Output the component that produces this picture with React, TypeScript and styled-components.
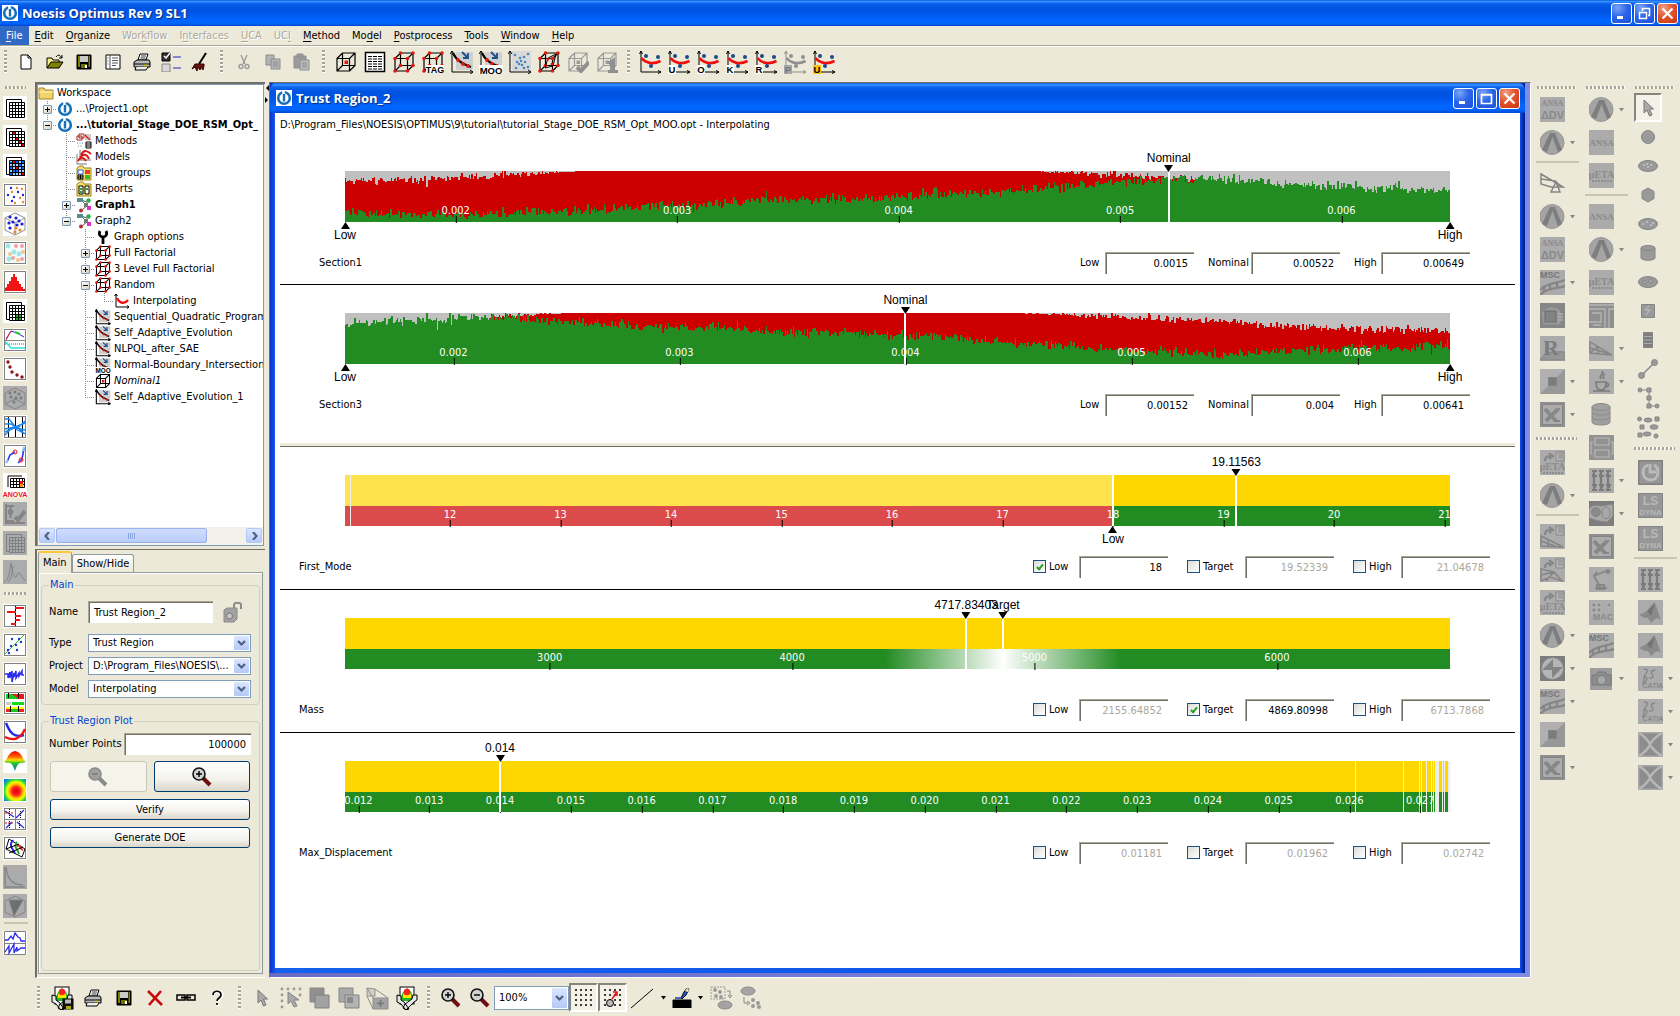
import React from "react";
import styled, { createGlobalStyle, css } from "styled-components";

const FACE = "#ece9d8";
const UI = `"DejaVu Sans Condensed", "DejaVu Sans", sans-serif`;
const PLOT = `"Liberation Sans", Arial, sans-serif`;

const Global = createGlobalStyle`
  *, *::before, *::after { box-sizing: border-box; }
  body { margin: 0; background: ${FACE}; font: 11px/14px ${UI}; color: #000; }
  button, input, select { font: inherit; color: inherit; margin: 0; padding: 0; border-radius: 0; }
  button { background: none; border: 0; }
  svg { display: block; flex: none; }
`;

/* ---------- frame ---------- */
const Shell = styled.div`
  display: flex;
  flex-direction: column;
  height: 100vh;
  overflow: hidden;
`;
const xpBlue = "linear-gradient(180deg,#0a5be8 0,#3a93ff 6%,#0a62ee 14%,#0053e1 30%,#0054e6 50%,#0066ff 76%,#0064fa 90%,#0046cf 100%)";
const TitleBar = styled.header<{ $inner?: boolean }>`
  display: flex;
  align-items: center;
  flex: none;
  height: ${(p) => (p.$inner ? 30 : 26)}px;
  padding: 0 ${(p) => (p.$inner ? 5 : 2)}px 0 ${(p) => (p.$inner ? 6 : 2)}px;
  background: ${xpBlue};
  border-radius: ${(p) => (p.$inner ? "7px 7px 0 0" : "0")};
`;
const TitleText = styled.h1`
  flex: 1;
  margin: 0 0 0 4px;
  font: 700 13px/18px "Open Sans", sans-serif;
  color: #fff;
  text-shadow: 1px 1px 1px #0a2a80;
`;
const WinButtons = styled.div`
  display: flex;
  gap: 2px;
`;
const WinButton = styled.button<{ $close?: boolean }>`
  display: grid;
  place-items: center;
  width: 21px;
  height: 21px;
  border: 1px solid #fff;
  border-radius: 3px;
  background: ${(p) =>
    p.$close
      ? "radial-gradient(circle at 30% 20%,#f0a088 0,#e2552f 45%,#c8340c 100%)"
      : "radial-gradient(circle at 30% 20%,#7aa6f5 0,#2d66ea 45%,#1c4fd8 100%)"};
`;
const MenuBar = styled.nav`
  display: flex;
  flex: none;
  height: 21px;
  border-bottom: 1px solid #fff;
  box-shadow: inset 0 -1px 0 #aca899;
`;
const MenuItem = styled.button<{ $active?: boolean }>`
  height: 19px;
  padding: 0 6px;
  color: ${(p) => (p.$active ? "#fff" : "#000")};
  background: ${(p) => (p.$active ? "#316ac5" : "transparent")};
  &:disabled { color: #aca899; text-shadow: 1px 1px 0 #fff; }
  u { text-underline-offset: 2px; }
`;
const Body = styled.div`
  display: flex;
  flex: 1;
  min-height: 0;
`;

/* ---------- tool bars ---------- */
const ToolBar = styled.div<{ $bottom?: boolean }>`
  display: flex;
  align-items: center;
  flex: none;
  height: ${(p) => (p.$bottom ? 37 : 35)}px;
  padding: 0 0 ${(p) => (p.$bottom ? 0 : 5)}px ${(p) => (p.$bottom ? 31 : 0)}px;
  & > :first-child { ${(p) => !p.$bottom && "width: 11px; padding: 0 4px;"} }
`;
const Handle = styled.span<{ $down?: boolean }>`
  flex: none;
  ${(p) =>
    p.$down
      ? css`height: 15px; padding: 6px 4px; width: 100%;
        &::before { content: ""; display: block; height: 3px;
          background: repeating-linear-gradient(90deg, #a8a597 0 2px, #fff 2px 3px, ${FACE} 3px 4px); }`
      : css`width: 15px; height: 24px; padding: 0 6px;
        &::before { content: ""; display: block; height: 100%;
          background: repeating-linear-gradient(180deg, #a8a597 0 2px, #fff 2px 3px, ${FACE} 3px 4px); }`}
`;
const Rule = styled.hr`
  flex: none;
  width: calc(100% - 6px);
  height: 2px;
  margin: 2px 0 4px 4px;
  border: 0;
  background: #c9c5b2;
`;
const ToolButton = styled.button<{ $w?: number; $h?: number; $on?: boolean }>`
  display: grid;
  place-items: center;
  flex: none;
  width: ${(p) => p.$w ?? 29}px;
  height: ${(p) => p.$h ?? 29}px;
  ${(p) =>
    p.$on &&
    css`border: 2px solid; border-color: #87857b #fff #fff #87857b; background: #f3f1e8;`}
`;
const Drop = styled.button`
  width: 15px;
  height: 25px;
  display: grid;
  place-items: center;
`;
const LeftTools = styled.div`
  display: flex;
  flex-direction: column;
  flex: none;
  width: 35px;
  padding-right: 5px;
`;
const RightTools = styled.div`
  display: flex;
  flex: none;
  padding: 0 1px;
`;
const RightColumn = styled.div`
  width: 49px;
  display: flex;
  flex-direction: column;
`;
const TopHandle = styled.span`
  display: block;
  flex: none;
  height: 11px;
  padding: 4px 4px 4px 5px;
  &::before {
    content: "";
    display: block;
    height: 3px;
    background: repeating-linear-gradient(90deg, #a8a597 0 2px, #fff 2px 3px, ${FACE} 3px 4px);
  }
`;
const RightCell = styled.div`
  display: flex;
  align-items: center;
  height: 33px;
  padding-left: 7px;
`;
const ShapeCell = styled.div`
  height: 29px;
  padding-left: 4px;
`;

/* ---------- side panel ---------- */
const Side = styled.aside`
  display: flex;
  flex-direction: column;
  flex: none;
  width: 230px;
`;
const TreeFrame = styled.section`
  display: flex;
  flex-direction: column;
  flex: 1;
  min-height: 0;
  border: solid #716f64;
  border-width: 2px 0 0 2px;
  margin-bottom: 3px;
`;
const TreeView = styled.div`
  display: flex;
  flex-direction: column;
  flex: 1;
  min-height: 0;
  width: 227px;
  border: 1px solid #7f9db9;
  background: #fff;
`;
const TreeList = styled.ul`
  flex: 1;
  min-height: 0;
  margin: 0;
  padding: 0;
  list-style: none;
  overflow: hidden;
`;
const TreeRow = styled.li<{ $bold?: boolean; $italic?: boolean }>`
  display: flex;
  align-items: center;
  height: 16px;
  white-space: nowrap;
  font-weight: ${(p) => (p.$bold ? 700 : 400)};
  font-style: ${(p) => (p.$italic ? "italic" : "normal")};
`;
const TreeLabel = styled.span`
  margin-left: 3px;
`;
const Guide = styled.span<{ $line: string }>`
  display: grid;
  place-items: center;
  position: relative;
  flex: none;
  width: 19px;
  height: 16px;
  &::before {
    content: "";
    position: absolute;
    left: 9px;
    top: 0;
    width: 1px;
    height: ${(p) => (p.$line === "end" ? 8 : 16)}px;
    background: ${(p) =>
      p.$line === "none" ? "none" : "repeating-linear-gradient(180deg,#8c8c8c 0 1px,#fff 1px 2px)"};
  }
  &::after {
    content: "";
    position: absolute;
    left: 9px;
    right: 0;
    top: 8px;
    height: 1px;
    background: ${(p) =>
      p.$line === "end" || p.$line === "tee" ? "repeating-linear-gradient(90deg,#8c8c8c 0 1px,#fff 1px 2px)" : "none"};
  }
`;
const Expander = styled.button`
  position: relative;
  z-index: 1;
  display: grid;
  place-items: center;
  width: 9px;
  height: 9px;
  border: 1px solid #7898b5;
  border-radius: 1px;
  background: linear-gradient(135deg,#fff,#d6d0c0);
`;
const ScrollBar = styled.div`
  display: flex;
  flex: none;
  height: 18px;
  padding: 1px 1px 2px;
  gap: 1px;
  background: #f3f1ec;
`;
const ScrollButton = styled.button`
  display: grid;
  place-items: center;
  width: 16px;
  height: 15px;
  border: 1px solid #b4c8f6;
  border-radius: 2px;
  background: linear-gradient(#dbe6fe,#b8ccfa);
`;
const ScrollTrack = styled.div`
  flex: 1;
  display: flex;
`;
const ScrollThumb = styled.div`
  display: grid;
  place-items: center;
  width: 80%;
  border: 1px solid #98b2ee;
  border-radius: 2px;
  background: linear-gradient(#cfddfd,#b9cdfb);
`;
const Props = styled.section`
  display: flex;
  flex-direction: column;
  flex: none;
  height: 429px;
  padding: 1px 1px 3px 1px;
  border: solid #716f64;
  border-width: 1px 0 0 2px;
  border-bottom: 1px solid #fff;
  margin-bottom: 1px;
`;
const Tabs = styled.div`
  display: flex;
  align-items: flex-end;
  height: 21px;
`;
const Tab = styled.button<{ $active?: boolean }>`
  height: ${(p) => (p.$active ? 22 : 18)}px;
  margin-bottom: ${(p) => (p.$active ? -1 : 0)}px;
  padding: 0 4px;
  border: 1px solid #919b9c;
  border-bottom: 0;
  border-radius: 3px 3px 0 0;
  background: ${(p) => (p.$active ? FACE : "linear-gradient(#fff,#ece9d8)")};
  ${(p) => p.$active && css`border-top: 2px solid #ffc73c; z-index: 1;`}
`;
const Pane = styled.form`
  display: flex;
  flex-direction: column;
  flex: 1;
  width: 225px;
  padding: 5px 2px 2px 2px;
  border: 1px solid #919b9c;
  box-shadow: inset 1px 1px 0 #fff;
`;
const Group = styled.fieldset<{ $grow?: boolean }>`
  display: flex;
  flex-direction: column;
  min-width: 0;
  flex: ${(p) => (p.$grow ? 1 : "none")};
  margin: 0 0 ${(p) => (p.$grow ? 0 : 9)}px;
  padding: ${(p) => (p.$grow ? 5 : 9)}px 8px 6px 7px;
  border: 1px solid #d0d0bf;
  border-radius: 4px;
`;
const Legend = styled.legend`
  margin: 0;
  padding: 0 1px;
  line-height: 14px;
  color: #0046d5;
`;
const FormRow = styled.div<{ $gap?: number }>`
  display: flex;
  align-items: center;
  margin-bottom: ${(p) => p.$gap ?? 5}px;
`;
const FormLabel = styled.label`
  width: 39px;
`;
const NumberLabel = styled.label`
  width: 75px;
  white-space: nowrap;
`;
const sunken = css`
  height: 22px;
  border: solid #aca899;
  border-width: 1px 0 0 1px;
  box-shadow: inset 1px 1px 0 #716f64;
  background: #fff;
  outline: 0;
`;
const TextInput = styled.input<{ $right?: boolean }>`
  ${sunken}
  flex: 1;
  min-width: 0;
  padding: 0 5px;
  text-align: ${(p) => (p.$right ? "right" : "left")};
`;
const LockButton = styled.button`
  width: 22px;
  margin: 0 7px 0 9px;
`;
const SelectBox = styled.span<{ $w?: number; $h?: number }>`
  display: grid;
  align-items: center;
  flex: ${(p) => (p.$w ? "none" : 1)};
  width: ${(p) => (p.$w ? p.$w + "px" : "auto")};
  height: ${(p) => p.$h ?? 18}px;
  border: 1px solid #7f9db9;
  background: #fff;
  min-width: 0;
  & > * { grid-area: 1 / 1; }
`;
const Select = styled.select`
  appearance: none;
  width: 100%;
  height: 100%;
  padding-left: 4px;
  border: 0;
  background: none;
  outline: 0;
`;
const SelectArrow = styled.span`
  justify-self: end;
  align-self: stretch;
  display: grid;
  place-items: center;
  width: 15px;
  margin: 1px;
  border-radius: 1px;
  background: linear-gradient(#dbe6fe,#b4c8f6);
  pointer-events: none;
`;
const PushButton = styled.button<{ $tall?: boolean }>`
  display: grid;
  place-items: center;
  flex: 1;
  height: ${(p) => (p.$tall ? 31 : 21)}px;
  border: 1px solid #003c74;
  border-radius: 3px;
  background: linear-gradient(#fff,#f3f2ec 60%,#d9d5c8);
  &:disabled { border-color: #c9c7ba; background: #f5f4ea; }
`;
const ButtonRow = styled.div`
  display: flex;
  gap: 7px;
  margin: 0 1px 7px;
`;
const Splitter = styled.div`
  flex: none;
  width: 4px;
  padding-top: 3px;
`;

/* ---------- MDI area ---------- */
const Mdi = styled.main`
  display: flex;
  flex: 1;
  min-width: 0;
  margin-bottom: 1px;
  padding: 0 5px 4px 0;
  border: 1px solid;
  border-color: #716f64 #fff #fff #716f64;
  background: linear-gradient(90deg,#6a6cc4,#7f8ce6);
`;
const Child = styled.section`
  display: flex;
  flex-direction: column;
  flex: 1;
  min-width: 0;
  border: solid #0036c8;
  border-width: 0 5px 5px;
  border-image: linear-gradient(90deg,#0a2fd0,#1660ee 6px,#0a50e8 calc(100% - 5px),#00138c) 1;
  border-image-slice: 0 5 5 5;
`;
const ChildTitle = styled.div`
  margin: 0 -5px;
`;
const Sheet = styled.div`
  flex: 1;
  padding: 0 5px;
  background: #fff;
`;
const Path = styled.p`
  height: 30px;
  margin: 0;
  padding: 5px 0 0;
  line-height: 14px;
`;
const Band = styled.hr`
  height: 4px;
  margin: 17px 0 0;
  border: 0;
  border-bottom: 1px solid #716f64;
  background: #ece9d8;
  background-clip: padding-box;
`;
const PlotSection = styled.section<{ $output?: boolean; $last?: boolean }>`
  padding: 28px 0 ${(p) => (p.$output ? 11 : 10)}px;
  border-bottom: ${(p) => (p.$last ? 0 : 1)}px solid #000;
`;
const BarArea = styled.div`
  position: relative;
  height: 51px;
  margin: 0 65px 29px;
`;
const AxisLayer = styled.div`
  position: absolute;
  inset: 0 0 -1px 0;
  overflow: hidden;
`;
const Tick = styled.span`
  position: absolute;
  bottom: 0;
  height: 19px;
  transform: translateX(-50%);
  line-height: 14px;
  color: #fff;
  text-align: center;
  &::after {
    content: "";
    position: absolute;
    left: 50%;
    bottom: 0;
    width: 1px;
    height: 7px;
    background: #000;
  }
`;
const Marker = styled.div<{ $below?: boolean }>`
  position: absolute;
  top: ${(p) => (p.$below ? 51 : -19)}px;
  display: flex;
  flex-direction: ${(p) => (p.$below ? "column-reverse" : "column")};
  align-items: center;
  transform: translateX(-50%);
  font: 12px/13px ${PLOT};
`;
const MarkerLine = styled.span`
  position: absolute;
  top: 0;
  width: 2px;
  height: 51px;
  margin-left: -1px;
  background: #fff;
`;
const FieldRow = styled.div<{ $output?: boolean }>`
  display: flex;
  align-items: center;
  gap: ${(p) => (p.$output ? 19 : 14)}px;
  height: 23px;
  padding: 0 ${(p) => (p.$output ? "25px 0 19px" : "45px 0 39px")};
`;
const VariableName = styled.span`
  flex: 1;
`;
const Field = styled.span`
  display: flex;
  align-items: center;
`;
const FieldLabel = styled.label<{ $output?: boolean; $w: number }>`
  display: flex;
  align-items: center;
  width: ${(p) => p.$w}px;
`;
const ValueInput = styled.input`
  ${sunken}
  width: 89px;
  padding: 0 6px 0 4px;
  text-align: right;
  &:disabled { color: #aca899; }
`;
const Check = styled.input`
  appearance: none;
  width: 13px;
  height: 13px;
  margin-right: 3px;
  border: 1px solid #1c5180;
  background: linear-gradient(135deg,#dcdcd7,#fff);
  display: grid;
  place-items: center;
  &:checked::before {
    content: "";
    width: 4px;
    height: 7px;
    border: solid #21a121;
    border-width: 0 2px 2px 0;
    transform: rotate(40deg);
  }
`;

/* ---------- icon drawing ---------- */
type IconProps = { children?: React.ReactNode; s?: number; v?: number; box?: string };
const Svg = ({ children, s = 24, v = 24, box }: IconProps) => (
  <svg width={s} height={s} viewBox={box ?? `0 0 ${v} ${v}`} fill="none" stroke="#000" strokeWidth="1" aria-hidden="true">
    {children}
  </svg>
);
const T = ({ x, y, z, f = "#8a8a8a", fam = "Liberation Sans", children }: any) => (
  <text x={x} y={y} fontSize={z} fill={f} stroke="none" fontWeight="700" textAnchor="middle" fontFamily={`${fam}, sans-serif`}>
    {children}
  </text>
);
const Logo = ({ bg = false, s = 16 }) => (
  <Svg s={s} v={16}>
    {bg && <rect width="16" height="16" fill="#fff" stroke="none" />}
    <circle cx="8" cy="8" r="5.800" stroke="#1670b8" strokeWidth="2.600" />
    <path d="M7.500 0v6" stroke="#fff" strokeWidth="2.600" />
    <path d="M8 4v7.500" stroke="#1670b8" strokeWidth="2.400" />
  </Svg>
);
const Caret = ({ c = "#000" }) => (
  <svg width="5" height="4" viewBox="0 0 5 4" aria-hidden="true"><path d="M0 0h5L2.5 3.5z" fill={c} /></svg>
);
const Chevron = ({ d = "M1 2l3.500 3.500L8 2" }) => (
  <svg width="9" height="8" viewBox="0 0 9 8" fill="none" stroke="#4d6185" strokeWidth="2.200" aria-hidden="true"><path d={d} /></svg>
);
const cubePath = "M3 8.500h12.500v12.500H3zM8.500 3h12.500v12.500H8.500zM3 8.500L8.500 3M15.500 8.500L21 3M3 21l5.500-5.500M15.500 21l5.500-5.500";
const cornerPts = [[3, 8.5], [15.5, 8.5], [3, 21], [15.5, 21], [8.5, 3], [21, 3], [8.5, 15.5], [21, 15.5]];
const dots = (pts: number[][], c: string, r = 1.5) =>
  pts.map(([x, y], i) => <circle key={i} cx={x} cy={y} r={r} fill={c} stroke="none" />);
const Cube = ({ s = 22, c = "#000", corners = false, center = false, children }: any) => (
  <Svg s={s} box="1 1 22 22">
    <path d={cubePath} stroke={c} strokeWidth={s < 20 ? 1.4 : 1.2} />
    {corners && dots(cornerPts, "#e21a10", 1.8)}
    {center && <rect x="10.500" y="10.500" width="3.500" height="3.500" fill={c === "#000" ? "#e21a10" : c} stroke="none" />}
    {children}
  </Svg>
);
const Descent = ({ s = 24, moo = false }) => (
  <Svg s={s}>
    <path d="M6 2h17v18H6z" fill="#cfcfcf" stroke="none" />
    <path d="M2 1v21h21M0 4l2-3 2 3M20 20l3 2-3 2" strokeWidth={s < 20 ? 1.6 : 1} />
    <path d="M3 3c3 7 8 10 18 14" strokeWidth="2.200" />
    <path d="M12 2l6 6M18 3v5h-5" stroke="#1c4f8c" strokeWidth="1.800" />
    {dots([[8, 10], [13, 14], [18, 16]], "#e21a10", s < 20 ? 1.7 : 1.9)}
    {moo && <><rect y="15" width="24" height="9" fill="#fff" stroke="none" /><T x="12" y="23.500" z="9.500" f="#000">MOO</T></>}
  </Svg>
);
const Response = ({ tag, off, gold }: { tag?: string; off?: boolean; gold?: boolean }) => {
  const k = off ? "#8f8f8f" : "#000";
  return (
    <Svg>
      <path d="M2 1v21h20M.5 4L2 1l1.500 3M19 20.500l3 1.500-3 1.500" stroke={k} />
      <path d="M2.500 8c4 5 11 7 19 3" stroke={off ? k : "#f20d0d"} strokeWidth="2.600" />
      {dots([[7, 6], [19, 7], [12, 16]], off ? k : "#1b4b8a", 2)}
      {tag && <><rect x="0" y="15" width="8" height="9" fill={gold ? "#ffc20e" : off ? "#a6a6a6" : "#fff"} stroke="none" /><T x="4" y="23" z="9.500" f={off ? "#777" : "#000"}>{tag}</T></>}
    </Svg>
  );
};
const Magnifier = ({ plus = false, off = false, s = 22 }) => (
  <Svg s={s} v={22}>
    <path d="M12 12l7 7" stroke={off ? "#8a8a8a" : "#6e0f0f"} strokeWidth="4" />
    <circle cx="8" cy="8" r="6" fill={off ? "#a0a0a0" : "#d2d2d2"} stroke={off ? "#8a8a8a" : "#111"} strokeWidth="1.600" />
    <path d={plus ? "M5 8h6M8 5v6" : "M5 8h6"} stroke={off ? "#777" : "#000"} strokeWidth="1.400" />
  </Svg>
);
const Disk = () => (
  <Svg s={16} v={16}>
    <path d="M1 1h14v14H1z" fill="#000" /><path d="M2 2h2v11H2z" fill="#808000" stroke="none" />
    <path d="M4 2h8v6H4z" fill="#c8c8c8" stroke="none" /><path d="M12.500 2h1.500v11h-1.500z" fill="#808000" stroke="none" />
    <path d="M5 10h6v4H5z" fill="#707000" stroke="none" /><path d="M9 11h2v3H9z" fill="#fff" stroke="none" />
  </Svg>
);
const Printer = () => (
  <Svg s={18} v={18}>
    <path d="M5 7l2-6h8l-2 6z" fill="#fff" /><path d="M1 9l3-2h12l1 2v5H1z" fill="#b8b8b8" /><path d="M1 11h16M3 14l-1 3h11l2-3" fill="#eee" />
    <path d="M8 3h5M7.500 5h5" strokeWidth=".8" /><path d="M11 12.500h3" stroke="#d8c800" strokeWidth="1.500" />
  </Svg>
);
const Arrow = ({ s = 18 }) => (
  <Svg s={s} v={18}><path d="M5 1v13l3-3 2.500 6 2.500-1-2.500-6h4z" fill="#a9a9a9" stroke="#777" /></Svg>
);
const Rainbow = ({ disk = false }) => (
  <Svg s={24}>
    <rect x="5" y="1" width="14" height="17" fill="#fff" />
    <path d="M12 2c5 4 7 8 6 13H6C5 10 8 5 12 2z" fill="#24b324" stroke="none" />
    <path d="M12 3c3 3 5 6 4 9H8c-1-3 1-6 4-9z" fill="#ffe100" stroke="none" /><circle cx="12" cy="6" r="3.200" fill="#f22" stroke="none" />
    <path d="M2 9l4 1v4l3 2 5 7-3 1-5-6-4-2zM22 9l-4 0-1 4-7 5-2 4 3 2 8-8 3-2z" fill="#e6e6e6" />
    {disk && <><rect x="13" y="13" width="10" height="10" fill="#111" /><path d="M15 13.500h6v4h-6z" fill="#bbb" stroke="none" /><path d="M16 20h5v3h-5z" fill="#b8b000" stroke="none" /></>}
  </Svg>
);

const gridLines = "M9.500 7v15M12.500 7v15M15.500 7v15M18.500 7v15M6 9.500h15M6 12.500h15M6 15.500h15M6 18.500h15M6.500 6.500h15v15h-15z";
const Grid = ({ c = "#000", bg = "#fff", children }: any) => (
  <Svg>
    <rect width="24" height="24" fill={bg} stroke="none" />
    <path d="M6 20.500h-2.500v-17h15v3" stroke={c} />
    {children}
    <path d={gridLines} stroke={c} />
  </Svg>
);
const Box = ({ children }: any) => (
  <Svg><rect width="24" height="24" fill="#fff" stroke="none" /><rect x="1.500" y="1.500" width="21" height="21" stroke="#808080" />{children}</Svg>
);
const Dim = ({ children }: any) => (
  <Svg><rect width="24" height="24" fill="#ababab" stroke="none" /><g stroke="#858585">{children}</g></Svg>
);

const leftA: React.ReactNode[] = [
  <Grid />,
  <Grid><path d="M9 7h4v3H9zM12 12h4v4h-4zM15 15h4v4h-4zM18 18h4v4h-4z" fill="#e00" stroke="none" /></Grid>,
  <Grid><path d="M6 7h15v14H6z" fill="#9cd2ff" stroke="none" /><path d="M7 8h2v2H7zM13 7h2v2h-2zM7 13h2v2H7zM13 16h2v2h-2zM16 10h2v2h-2zM7 19h2v2H7zM10 16h2v2h-2zM19 13h2v2h-2zM19 7h2v2h-2z" fill="#06f" stroke="none" /><path d="M10 7h3v3h-3zM12 12h4v4h-4zM18 18h4v4h-4z" fill="#e00" stroke="none" /></Grid>,
  <Box>{dots([[8, 5], [5, 12], [11, 14], [15, 9], [20, 12], [9, 18]], "#1b2bd8", 1.200)}{dots([[14, 5], [19, 6], [9, 9], [17, 15], [12, 20], [20, 19]], "#e88a2a", 1.200)}</Box>,
  <Svg><rect width="24" height="24" fill="#fff" stroke="none" /><path d="M12 1l10 5v12l-10 5-10-5V6zM2 6l10 5 10-5M12 11v12" stroke="#909090" />{dots([[7, 5], [13, 6], [6, 11], [10, 10], [16, 9], [19, 12], [14, 13], [7, 16]], "#1b1bd8", 1.600)}{dots([[13, 16], [17, 18], [12, 20]], "#e8862a", 1.600)}</Svg>,
  <Box><rect x="2" y="2" width="20" height="20" fill="#f4fafa" stroke="none" />{dots([[5, 5], [11, 11], [16, 13], [6, 18]], "#9fe6e6", 2.400)}{dots([[19, 5], [10, 17], [19, 18], [13, 5]], "#f0a0a0", 2)}{dots([[7, 13], [15, 19], [20, 11]], "#f4c48a", 2)}</Box>,
  <Box><path d="M2 21v-3l2-1v-3h2v-3h2V7h2V4h2v3h2v4h2v3h2v3h2v2h2v2z" fill="#f01414" stroke="none" /></Box>,
  <Grid><path d="M12 15h7v7h-7z" fill="#1fae1f" stroke="none" /></Grid>,
  <Box><path d="M2 12.500h20" stroke="#888" /><path d="M3 11l5-8 6 2 7 4" stroke="#2a2ae0" /><path d="M3 12l5-9" stroke="#e22" /><path d="M12 4l5 2" stroke="#2c2" strokeWidth="2" /><path d="M2 16h20" stroke="#d22" strokeDasharray="1 1" /><path d="M2 13l6 7h14" stroke="#3dd" strokeWidth="1.500" /></Box>,
  <Box>{dots([[5, 5], [7, 10], [9, 15], [14, 18], [19, 20]], "#8c1414", 1.700)}</Box>,
  <Dim><path d="M12 2l10 5v11l-10 5-10-5V7zM2 18l10-5 10 5" />{dots([[7, 7], [12, 6], [16, 8], [8, 11], [13, 12], [18, 12], [11, 16]], "#7c7c7c", 1.500)}</Dim>,
  <Box><path d="M5.500 2v20M12.500 2v20M19.500 2v20" /><path d="M2 4h4l8 10 8-8M2 9h6l6 3 8 7M2 14l10-2 10-4M2 20l8-8 12 3M2 17l9-4 11 6" stroke="#1c86ee" strokeWidth="1.400" /></Box>,
  <Box><path d="M4 18l3-7 5-3M15 19l4-4 2-11" stroke="#2a3ae0" strokeWidth="1.600" /><circle cx="12" cy="8" r="2" stroke="#e11" /><circle cx="18" cy="16" r="2" stroke="#e11" /><path d="M3 19l2-3M20 7l1-4" stroke="#7cc8ee" strokeWidth="2" /></Box>,
  <Svg><rect width="24" height="24" fill="#fff" stroke="none" /><path d="M5 14V3h14M7.500 5.500h14v9h-14zM7 8.500h15M7 11.500h15M10.500 5v10M13.500 5v10M16.500 5v10M19.500 5v10" /><path d="M17 8h3v3h-3z" fill="#e11" stroke="none" /><path d="M17 11h3v3h-3z" fill="#f90" stroke="none" /><T x="12" y="23.500" z="7" f="#e11">ANOVA</T></Svg>,
  <Dim><path d="M4 4h7M7.500 4v12M4 19h7M3 2v19h19" strokeWidth="2" /><circle cx="7.500" cy="10" r="2.500" fill="#858585" /><path d="M12 15l3 3 7-9" strokeWidth="4" /></Dim>,
  <Grid bg="#ababab" c="#808080" />,
  <Dim><path d="M1 22c4-1 5-6 7-19 2 12 3 14 5 14 2-5 3-5 4-3l5 7M5 22c3-2 4-8 5-16" /></Dim>,
];
const leftB: React.ReactNode[] = [
  <Box><path d="M12.500 2v20" /><path d="M12 4h9M4 8h9M12 12h6M12 16h5M8 20h5" stroke="#f01414" strokeWidth="2" /></Box>,
  <Box><path d="M2 21L21 2" stroke="#2c2" />{dots([[5, 17], [8, 13], [9, 6], [13, 12], [14, 17], [16, 6], [18, 9], [6, 20]], "#1b3bd8", 1.200)}</Box>,
  <Box><path d="M2 12h3v4l2-6v6l2-7v11l2-9v4l2-6v7l3-5v3l3-5v4h2" stroke="#2a2af0" strokeWidth="1.500" /></Box>,
  <Box><path d="M3 3h18v5H3z" fill="#f01414" stroke="none" /><path d="M3 3h5l4 2 3 3H3z" fill="#1c2" stroke="none" /><path d="M9 11h12v3H9z" fill="#1d1" stroke="none" /><path d="M3 11h5v3H3z" fill="#ccc" stroke="none" /><path d="M3 16h18v2H3z" fill="#ff0" stroke="none" /><path d="M3 18h18v3H3z" fill="#e22" stroke="none" /><path d="M7 18h8v3H7z" fill="#1c1" stroke="none" /><path d="M5.500 2v5M15.500 2v5M15.500 15v6M7.500 15v6" /></Box>,
  <Box><path d="M3 3c4 10 8 15 18 12" stroke="#1d2be0" strokeWidth="2.400" /><path d="M2 17c8 4 15 3 20-8" stroke="#f01414" strokeWidth="2.400" /></Box>,
  <Svg><defs><linearGradient id="sf" x1="0" y1="0" x2="0" y2="1"><stop offset="0" stopColor="#e00" /><stop offset=".3" stopColor="#f60" /><stop offset=".45" stopColor="#fd0" /><stop offset=".6" stopColor="#2c2" /><stop offset="1" stopColor="#06c" /></linearGradient></defs><rect width="24" height="24" fill="#fff" stroke="none" /><path d="M1 13C5 10 5 3 12 2c7 1 7 8 11 11l-4 1c-3-1-5 2-7 8-2-6-4-9-7-8z" fill="url(#sf)" stroke="none" /></Svg>,
  <Svg><defs><radialGradient id="ht" cx=".55" cy=".55" r=".7"><stop offset="0" stopColor="#d00" /><stop offset=".28" stopColor="#f22" /><stop offset=".45" stopColor="#fb0" /><stop offset=".6" stopColor="#ef0" /><stop offset=".75" stopColor="#3d3" /><stop offset="1" stopColor="#07f" /></radialGradient></defs><rect width="24" height="24" fill="#fff" stroke="none" /><rect x="1" y="1" width="22" height="22" fill="url(#ht)" stroke="none" /></Svg>,
  <Box><path d="M12.500 2v20M2 12.500h20" stroke="#808080" /><path d="M2 4l9 6M13 11l8-8M3 21l6-6M14 15l7 6" stroke="#2a2ae0" strokeWidth="1.300" /><path d="M2 6h9M2 16h9" stroke="#d11" strokeDasharray="2 1" /><path d="M6.500 2v9M6.500 14v8M17.500 4v7M16.500 14v8" strokeDasharray="1 1" /></Box>,
  <Box><path d="M6 3l16 10-3 8L3 13z" /><path d="M10 4c-4 5-2 7 2 13" stroke="#22d" strokeWidth="2" /><path d="M14 6c-4 4 0 6 2 12" stroke="#2a2" strokeWidth="2" /><path d="M14 10c4-2 3 4 6 4" stroke="#e22" strokeWidth="2" /><path d="M3 13l13-5M6 17l14-6" /></Box>,
  <Dim><path d="M2 2v20h20M3 2c1 12 7 18 17 18" strokeWidth="1.400" /></Dim>,
  <Dim><path d="M12 2l10 5v11l-10 5-10-5V7z" /><path d="M6 6h14L11 22z" fill="#6f6f6f" /></Dim>,
];
const history = (
  <Svg><rect width="24" height="24" fill="#fff" stroke="none" /><path d="M1.500.5h21v23h-21zM2 12.500h20" stroke="#808080" /><path d="M2 9h3l3-4 2 3 2-6 3 4 2 1 1 3h4M2 21l4-6v7l5-9v9l3-6v4l4-3h4" stroke="#2a2af0" strokeWidth="1.300" /></Svg>
);

const topIcons: React.ReactNode[][] = [
  [
    <Svg s={16} v={16}><path d="M3 1h7l3 3v11H3z" fill="#fff" /><path d="M10 1v3h3" /></Svg>,
    <Svg s={18} v={18}><path d="M1 15V5h5l1 2h6v2" fill="#f5f08a" /><path d="M1 15l4-6h12l-4 6z" fill="#808000" /><path d="M10 4c2-3 4-2 6 1M16 2v3h-3" /></Svg>,
    <Disk />,
    <Svg s={16} v={16}><path d="M1 1h14v14H1z" fill="#fff" /><path d="M5 1v14M7 4h6M7 6.500h6M7 9h6M7 11.500h4M2.500 4h1M2.500 7h1M2.500 10h1" stroke="#555" /></Svg>,
    <Printer />,
    <Svg s={20} v={20}><path d="M1 1h8v8H1z" fill="#333" /><path d="M3 4l2 2 4-5" stroke="#fff" strokeWidth="1.500" /><path d="M1 12h8v8H1z" fill="#d8d8d8" stroke="#888" /><path d="M12 5h8M12 16h8" stroke="#6666c8" strokeWidth="1.600" /></Svg>,
    <Svg s={20} v={20}><path d="M16 1L9 12" strokeWidth="2" /><path d="M5 12h9v2l-1 4-2-3-1 3-2-3-1 4-2-4-3 2z" fill="#6a0d0d" stroke="#300" /></Svg>,
  ],
  [
    <Svg s={16} v={16}><g stroke="#999" strokeWidth="1.300"><path d="M5 1l4 9M11 1L7 10" /><circle cx="5" cy="12.500" r="2" /><circle cx="11" cy="12.500" r="2" /></g></Svg>,
    <Svg s={18} v={18}><g fill="#b4b4b4" stroke="#8c8c8c"><path d="M2 2h8v10H2z" /><path d="M7 6h9v10H7z" /><path d="M9 9h5M9 11h5M9 13h5" /></g></Svg>,
    <Svg s={18} v={18}><g fill="#9c9c9c" stroke="#8c8c8c"><path d="M1 3h12v12H1z" /><path d="M4 1h6v3H4z" /><path d="M7 7h9v10H7z" fill="#bdbdbd" /><path d="M9 10h5M9 12h5M9 14h5" /></g></Svg>,
  ],
  [
    <Cube center />,
    <Svg s={22} v={22}><rect x="1.500" y="1.500" width="19" height="19" fill="#fff" strokeWidth="1.500" /><path d="M4 5.500h14M4 8h14M4 10.500h14M4 13h14M4 15.500h14M4 18h14" strokeDasharray="4 1" strokeWidth="1.100" /></Svg>,
    <Cube corners />,
    <Cube corners><rect x="5" y="15" width="19" height="9" fill="#fff" stroke="none" /><T x="14" y="22.500" z="9" f="#000">TAG</T></Cube>,
    <Descent />,
    <Descent moo />,
    <Svg><path d="M4 1h19v20H4z" fill="#d9d9d9" stroke="none" /><path d="M2 1v21h21M0 4l2-3 2 3M20 20l3 2-3 2" />{dots([[7, 5], [12, 8], [16, 7], [20, 4], [9, 12], [13, 11], [17, 12], [14, 15], [20, 17], [8, 18], [11, 14], [16, 18]], "#4a86c0", 1.300)}</Svg>,
    <Cube corners><path d="M8 18l3-10 8-4-3 12z" />{dots([[11, 9], [15, 14]], "#e21a10")}</Cube>,
    <Cube c="#9a9a9a" center><path d="M11 17l4 4 8-9" stroke="#8f8f8f" strokeWidth="4" /></Cube>,
    <Cube c="#9a9a9a" center><path d="M14 14l4-3v10M13 22h10" stroke="#8f8f8f" strokeWidth="4" /></Cube>,
  ],
  [
    <Response />, <Response tag="U" />, <Response tag="O" />, <Response tag="K" />, <Response tag="R" />,
    <Response tag="P" off />, <Response tag="U" gold />,
  ],
];

const G = ({ children, bg = "#ababab" }: any) => (
  <Svg s={25} v={25}><rect width="25" height="25" fill={bg} stroke="none" /><g stroke="#858585">{children}</g></Svg>
);
const Lambda = () => (
  <Svg s={25} v={25}><circle cx="12" cy="12.500" r="12" fill="#a4a4a4" stroke="#989898" /><path d="M2 20L10 3h5l7 17-4 2-5.500-15L7 22z" fill="#7e7e7e" stroke="none" /></Svg>
);
const Ansa = ({ dv = false }) => (
  <G>{dv ? <><T x="12.500" y="9" z="8" fam="Liberation Serif">ANSA</T><T x="12.500" y="22" z="11">ΔDV</T></> : <T x="12.500" y="16" z="9" fam="Liberation Serif">ANSA</T>}</G>
);
const corner = <><path d="M5 11c0-5 3-5 6-5M9 3l4 3-4 3" strokeWidth="2" fill="none" /><path d="M16 2h8v9h-8zM18 4h5M18 6h5M18 8h5" fill="#b8b8b8" /></>;
const Eta = ({ arrow = false }) => (
  <G>{arrow && corner}<T x="12.500" y={arrow ? 20 : 15} z="10" fam="Liberation Serif">μETA</T><path d={arrow ? "M3 23h20" : "M3 18h20"} strokeDasharray="2 1" strokeWidth="1.500" /></G>
);
const Msc = () => (
  <G><path d="M0 20c8-8 16-6 25-10M0 25c8-8 16-6 25-9M4 16v5M10 13v6M17 12v6" strokeWidth="2.200" /><T x="10" y="8" z="9" f="#777">MSC</T></G>
);
const Excel = () => (
  <G bg="#8f8f8f"><rect x="2.500" y="2.500" width="20" height="20" fill="#acacac" /><path d="M5 7l11 12M18 7L6 19" strokeWidth="4" stroke="#888" /><path d="M15 19h5M18 7h2" strokeWidth="2" /></G>
);
const Square = () => (
  <G bg="#989898"><path d="M0 0h25L17 8H8v9l-8 8z" fill="#b0b0b0" stroke="none" /><rect x="8.500" y="8.500" width="8" height="8" fill="#7c7c7c" /></G>
);
const Truss = ({ bare = false, arrow = false, v = 0 }) => (
  <G bg={bare ? FACE : "#ababab"}>
    {arrow && corner}
    {bare ? (
      <path d="M1 3l22 13H11L1 13zM1 8l14 2 7 6M11 21h9l-4-10zM1 3v10" strokeWidth="1.500" />
    ) : (
      <path
        d={v ? "M1 12l13 3 8 9-12-4-9 4zM1 18l13-3M6 24l8-9" : arrow ? "M1 12v10l22 1zM1 17l14 5M8 16v6" : "M1 6v11l22 2zM1 12l20 6M9 10v7M1 17l8-7"}
        strokeWidth="1.400"
      />
    )}
  </G>
);
const Beams = () => (
  <G>{[5, 12, 19].map((x) => <path key={x} d={`M${x - 2} 3h5M${x - 2} 22h5M${x} 3v19M${x - 2} 8h5M${x - 2} 17h5M${x - 1} 6v3M${x + 1} 16v4`} strokeWidth="2.200" stroke="#7b7b7b" />)}</G>
);
const Matlab = () => (
  <G><path d="M1 15l8-4 7-9c3 4 5 14 7 18-5-4-6 0-10 3-2-5-4-6-6-5z" fill="#8a8a8a" stroke="none" /><path d="M9 11l4 5 4-12" fill="#747474" stroke="none" /></G>
);
const Catia = () => (
  <G><path d="M6 3c8 0 0 6 0 8 5-1 3 5-1 7l2-9M17 4c-6 1-3 4-2 6s-2 2-4 2" strokeWidth="1.300" /><T x="15" y="22" z="7">CATIA</T></G>
);
const Cross = () => (
  <G bg="#8d8d8d"><path d="M0 0h25v25H0z" strokeWidth="3" stroke="#a8a8a8" /><path d="M1 1c8 5 9 8 11 11C14 9 17 5 24 1M1 24c8-5 9-8 11-11 2 3 5 7 12 11" strokeWidth="2.500" stroke="#b8b8b8" /></G>
);
const Ls = () => (
  <G bg="#979797"><rect x=".5" y=".5" width="24" height="24" /><T x="12.500" y="12" z="12" f="#b8b8b8">LS</T><T x="12.500" y="22" z="8" f="#b8b8b8">DYNA</T></G>
);

type Item = React.ReactNode | [React.ReactNode, true] | "rule" | "handle";
const colA: Item[] = [
  <Ansa dv />, [<Lambda />, true], "rule", <Truss bare />, [<Lambda />, true], <Ansa dv />, [<Msc />, true],
  <G bg="#868686"><path d="M1 10c6-8 14-8 20-2v14H3z" fill="#999" /><rect x="5" y="8" width="11" height="11" fill="#838383" stroke="#6c6c6c" /><path d="M18 11h5M18 14h5M18 17h5" stroke="#b0b0b0" strokeWidth="1.500" /></G>,
  <G><path d="M0 24c4-8 12-9 25-8v8z" fill="#969696" /><T x="11" y="19" z="22" f="#7c7c7c" fam="Liberation Serif">R</T></G>,
  [<Square />, true], [<Excel />, true], "handle", <Eta arrow />, [<Lambda />, true], "rule", <Truss arrow />, <Truss arrow v={1} />,
  <Eta arrow />, [<Lambda />, true],
  [<G bg="#7d7d7d"><circle cx="12.500" cy="12.500" r="11" fill="#b5b5b5" /><path d="M2 14L13 3v8h10L12 22v-8z" fill="#848484" stroke="none" /></G>, true],
  [<Msc />, true], <Square />, [<Excel />, true],
];
const colB: Item[] = [
  [<Lambda />, true], <Ansa />, <Eta />, "rule", <Ansa />, [<Lambda />, true], <Eta />,
  <G bg="#8f8f8f"><path d="M0 6h16v19M20 25V6h5M0 2h25M3 10h9v9H0M4 22h8" fill="none" stroke="#b6b6b6" strokeWidth="1.300" /></G>,
  [<Truss />, true],
  [<G><path d="M13 2c3 3-4 4-1 8M16 5c-2 1-2 3-1 5M7 13h10c0 7-2 8-5 8s-5-1-5-8zM17 14c4 0 3 4-1 4M4 22h17" strokeWidth="1.700" stroke="#7c7c7c" /></G>, true],
  <Svg s={25} v={25}><g fill="#a0a0a0" stroke="#8a8a8a"><path d="M3 5v15c0 4 18 4 18 0V5" /><ellipse cx="12" cy="5" rx="9" ry="3.500" /><path d="M3 10c0 4 18 4 18 0M3 15c0 4 18 4 18 0" /></g></Svg>,
  <G bg="#929292"><path d="M6 3h14v7H6zM6 15h14v7H6zM4 7H2v12h2M22 7h2v12h-2" stroke="#b8b8b8" strokeWidth="1.200" /></G>,
  [<Beams />, true],
  [<G bg="#7e7e7e"><path d="M0 8c4-5 8-4 12-3l12-2v12l-6 6c-8 0-14-3-18-4z" fill="#a8a8a8" /><circle cx="7" cy="11" r="4.500" fill="#8a8a8a" /><ellipse cx="17" cy="12" rx="4" ry="6" /></G>, true],
  <Excel />,
  <G><path d="M6 21h12M11 20L5 9l12-5M5 9l3-4M17 4l4 1M8 18h7v4H8z" strokeWidth="1.800" /><circle cx="19" cy="4.500" r="2" fill="#858585" /></G>,
  <G><path d="M3 3h4v4H3zM8 3h4v4H8zM18 3h4v4h-4zM3 8h4v4H3zM8 8h4v4H8z" fill="#8a8a8a" stroke="#b8b8b8" /><T x="14" y="20" z="9">MAC</T></G>,
  <Msc />,
  [<Svg s={25} v={25}><rect x="1" y="2" width="22" height="22" fill="#9d9d9d" stroke="none" /><path d="M3 9h4l2-3h7l2 3h4v10H3z" stroke="#787878" fill="#8d8d8d" /><circle cx="12.500" cy="14" r="4.500" stroke="#787878" fill="#a8a8a8" /></Svg>, true],
];
const shapes: React.ReactNode[] = [
  <Arrow />,
  <circle cx="12" cy="12" r="6.500" />,
  <><ellipse cx="12" cy="12" rx="9.500" ry="5.500" />{dots([[8, 11], [12, 13], [15, 11], [11, 10]], "#c4c4c4", 1)}</>,
  <path d="M12 5l6 3.500v7L12 19l-6-3.500v-7z" />,
  <><ellipse cx="12" cy="12" rx="9.500" ry="5.500" />{dots([[7, 12], [11, 10], [15, 13], [17, 11]], "#c4c4c4", 1)}</>,
  <><path d="M5 7v10c0 3 14 3 14 0V7" /><ellipse cx="12" cy="7" rx="7" ry="2.500" /></>,
  <><ellipse cx="12" cy="12" rx="9.500" ry="5.500" /><path d="M7 11h3v3H7zM13 9h3v4h-3z" fill="#b0b0b0" /></>,
  <><path d="M5.500 5.500h13v13h-13z" /><path d="M13 7l-4 4h5l-4 5" stroke="#c4c4c4" fill="none" /></>,
  <><path d="M7.500 4.500h9v15h-9z" fill="#7d7d7d" /><path d="M8 8.500h8M8 12h8M8 15.500h8" stroke="#aaa" /></>,
  <><path d="M5 19L19 5" strokeWidth="1.500" /><circle cx="18.500" cy="5.500" r="3" /><circle cx="5.500" cy="18.500" r="3" /></>,
  <><path d="M3 4h10v16h8" fill="none" /><circle cx="4" cy="4" r="2" /><path d="M11 2h4v4h-4zM11 10h4v4h-4zM11 18h4v4h-4z" /><circle cx="21" cy="20" r="2" /></>,
  <><circle cx="3.500" cy="4" r="2" /><ellipse cx="12" cy="5" rx="4" ry="2" /><path d="M19 2h4v4h-4zM4 10h4v4H4zM2 18h4v4H2z" /><ellipse cx="18" cy="12" rx="4" ry="2.200" /><ellipse cx="11" cy="19" rx="4" ry="2" /><circle cx="20" cy="21" r="2" /></>,
];
const colC: Item[] = [
  <G bg="#969696"><rect x=".5" y=".5" width="24" height="24" strokeWidth="2" stroke="#808080" /><path d="M10 5c-8 3-6 15 3 15 8 0 9-12 3-15M12 4v8h6" strokeWidth="2.800" stroke="#bcbcbc" /></G>,
  <Ls />, <Ls />, "rule", <Beams />, <Matlab />, <Matlab />, [<Catia />, true], [<Catia />, true], [<Cross />, true], [<Cross />, true],
];

const Items = ({ items }: { items: Item[] }) => (
  <>
    {items.map((it, i) => {
      if (it === "rule") return <Rule key={i} />;
      if (it === "handle") return <Handle key={i} $down />;
      const pair = Array.isArray(it);
      return (
        <RightCell key={i}>
          <ToolButton $w={26} $h={25}>{pair ? (it as any)[0] : it}</ToolButton>
          {pair && <Drop aria-label="More"><Caret c="#8a887c" /></Drop>}
        </RightCell>
      );
    })}
  </>
);

/* ---------- tree ---------- */
type Node = { t: string; g: string; icon: React.ReactNode; open?: boolean; bold?: boolean; italic?: boolean };
const grp = (
  <Svg s={16} v={16}><path d="M5 3l6 2M5 3l5 5M6 13l6-5" stroke="#555" /><path d="M1 1h6v4H1z" fill="#5b8f8b" stroke="none" /><circle cx="12.500" cy="3.500" r="2.200" fill="#2fa84f" stroke="none" /><path d="M8 6h4v4H8z" fill="#777" stroke="none" /><path d="M11 9h4v4h-4z" fill="#e22bd0" stroke="none" /><circle cx="5" cy="13.500" r="2" fill="#a33" stroke="none" /></Svg>
);
const nodes: Node[] = [
  { t: "Workspace", g: "", icon: <Svg s={16} v={16}><path d="M1 3h5l1 2h8v9H1z" fill="#f3d36b" stroke="#a8832a" /><path d="M1 7h14" stroke="#fff3b8" /></Svg> },
  { t: "...\\Project1.opt", g: "t", icon: <Logo />, open: false },
  { t: "...\\tutorial_Stage_DOE_RSM_Opt_", g: "e", icon: <Logo />, open: true, bold: true },
  { t: "Methods", g: " t", icon: <Svg s={16} v={16}><path d="M1 3h5v4H1zM3 1h5v4H3z" stroke="#a22" /><path d="M9 1h6v6H9z" fill="#ccc" stroke="none" /><path d="M9 2l5 5" stroke="#d22" strokeWidth="1.500" /><path d="M1 10h6M2 13h5" stroke="#4a86c0" strokeDasharray="1 1.500" /><path d="M10 9h5v6h-5zM10 11h5M10 13h5" /></Svg> },
  { t: "Models", g: " t", icon: <Svg s={16} v={16}><path d="M4 1v10h11M1 5v10h10" stroke="#777" /><path d="M5 6c3-6 7-4 10-1M4 9c3-5 7-4 9 1M2 12c2-4 6-4 8 0" stroke="#e11414" strokeWidth="2" /></Svg> },
  { t: "Plot groups", g: " t", icon: <Svg s={16} v={16}><path d="M1 3l3-2h3l1 2h7v12H1z" fill="#f6e26a" stroke="#a08420" /><path d="M9 5h5v4H9z" fill="#e33" stroke="none" /><path d="M9 10h5v4H9z" fill="#3b3" stroke="none" /><path d="M2 10h5v4H2zM2 12h5M4.500 10v4" /><path d="M2 5h5v4H2z" fill="#fff" stroke="#36c" /></Svg> },
  { t: "Reports", g: " t", icon: <Svg s={16} v={16}><path d="M1 3l3-2h3l1 2h7v12H1z" fill="#f6e26a" stroke="#a08420" /><path d="M3 5h4v8H3zM9 5h4v8H9z" fill="#fff" /><path d="M4 8h2M10 8h2M4 11h2" stroke="#2a2" strokeWidth="2" /></Svg> },
  { t: "Graph1", g: " t", icon: grp, open: false, bold: true },
  { t: "Graph2", g: " e", icon: grp, open: true },
  { t: "Graph options", g: "  t", icon: <Svg s={16} v={16}><path d="M5 2c-2 4 1 6 3 6s5-2 3-6M8 7v8" strokeWidth="2.800" /></Svg> },
  { t: "Full Factorial", g: "  t", icon: <Cube s={16} corners />, open: false },
  { t: "3 Level Full Factorial", g: "  t", icon: <Cube s={16} corners />, open: false },
  { t: "Random", g: "  t", icon: <Cube s={16} corners />, open: true },
  { t: "Interpolating", g: "  le", icon: <Svg s={16} v={16}><path d="M2 1v13h13M.5 3L2 1l1.500 2M13 12.500l2 1.500-2 1.500" /><path d="M3 5c3 6 8 6 11 2" stroke="#e11" strokeWidth="2.400" /></Svg> },
  { t: "Sequential_Quadratic_Program", g: "  t", icon: <Descent s={16} /> },
  { t: "Self_Adaptive_Evolution", g: "  t", icon: <Descent s={16} /> },
  { t: "NLPQL_after_SAE", g: "  t", icon: <Descent s={16} /> },
  { t: "Normal-Boundary_Intersection_", g: "  t", icon: <Descent s={16} moo /> },
  { t: "Nominal1", g: "  t", icon: <Cube s={16} center />, italic: true },
  { t: "Self_Adaptive_Evolution_1", g: "  e", icon: <Descent s={16} /> },
];
const lineKind: Record<string, string> = { " ": "none", t: "tee", e: "end", l: "line" };

const Tree = () => (
  <TreeFrame>
    <TreeView>
      <TreeList>
        {nodes.map((n, i) => (
          <TreeRow key={i} $bold={n.bold} $italic={n.italic}>
            {[...n.g].map((ch, j) => (
              <Guide key={j} $line={lineKind[ch]}>
                {j === n.g.length - 1 && n.open !== undefined && (
                  <Expander aria-label={n.open ? "Collapse" : "Expand"}>
                    <svg width="5" height="5" viewBox="0 0 5 5" stroke="#000"><path d={n.open ? "M0 2.500h5" : "M0 2.500h5M2.500 0v5"} /></svg>
                  </Expander>
                )}
              </Guide>
            ))}
            {n.icon}
            <TreeLabel>{n.t}</TreeLabel>
          </TreeRow>
        ))}
      </TreeList>
      <ScrollBar>
        <ScrollButton aria-label="Scroll left"><Chevron d="M6 0L2.500 4L6 8" /></ScrollButton>
        <ScrollTrack>
          <ScrollThumb><svg width="8" height="6" viewBox="0 0 8 6" stroke="#8ca6e0"><path d="M.5 0v6M2.500 0v6M4.500 0v6M6.500 0v6" /></svg></ScrollThumb>
        </ScrollTrack>
        <ScrollButton aria-label="Scroll right"><Chevron d="M3 0L6.500 4L3 8" /></ScrollButton>
      </ScrollBar>
    </TreeView>
  </TreeFrame>
);

/* ---------- property panel ---------- */
const Combo = ({ id, value, w, h }: { id: string; value: string; w?: number; h?: number }) => (
  <SelectBox $w={w} $h={h}>
    <Select id={id} aria-label={id}><option>{value}</option></Select>
    <SelectArrow><Chevron /></SelectArrow>
  </SelectBox>
);
const PropertyPanel = () => (
  <Props>
    <Tabs>
      <Tab $active>Main</Tab>
      <Tab>Show/Hide</Tab>
    </Tabs>
    <Pane onSubmit={(e) => e.preventDefault()}>
      <Group>
        <Legend>Main</Legend>
        <FormRow $gap={11}>
          <FormLabel htmlFor="name">Name</FormLabel>
          <TextInput id="name" defaultValue="Trust Region_2" />
          <LockButton type="button" aria-label="Unlock">
            <Svg s={22} v={22}><path d="M12 9V4c0-3 7-3 7 0v4" stroke="#8c8c8c" strokeWidth="2" /><path d="M2 9l3-2h10v11l-3 3H2z" fill="#a2a2a2" stroke="#8a8a8a" /><circle cx="7.500" cy="15" r="3" fill="#c8c8c8" stroke="#777" /></Svg>
          </LockButton>
        </FormRow>
        <FormRow><FormLabel htmlFor="Type">Type</FormLabel><Combo id="Type" value="Trust Region" /></FormRow>
        <FormRow><FormLabel htmlFor="Project">Project</FormLabel><Combo id="Project" value="D:\Program_Files\NOESIS\..." /></FormRow>
        <FormRow $gap={0}><FormLabel htmlFor="Model">Model</FormLabel><Combo id="Model" value="Interpolating" /></FormRow>
      </Group>
      <Group $grow>
        <Legend>Trust Region Plot</Legend>
        <FormRow $gap={6}>
          <NumberLabel htmlFor="points">Number Points</NumberLabel>
          <TextInput id="points" $right defaultValue="100000" />
        </FormRow>
        <ButtonRow>
          <PushButton type="button" $tall disabled aria-label="Zoom out"><Magnifier off /></PushButton>
          <PushButton type="button" $tall aria-label="Zoom in"><Magnifier plus /></PushButton>
        </ButtonRow>
        <ButtonRow><PushButton type="button">Verify</PushButton></ButtonRow>
        <ButtonRow><PushButton type="button">Generate DOE</PushButton></ButtonRow>
      </Group>
    </Pane>
  </Props>
);

/* ---------- plots ---------- */
type Pt = [number, number];
const lerp = (pts: Pt[], x: number) => {
  for (let i = 1; i < pts.length; i++) {
    if (x <= pts[i][0]) {
      const [a, b] = pts[i - 1];
      const [c, d] = pts[i];
      return b + ((x - a) / (c - a)) * (d - b);
    }
  }
  return pts[pts.length - 1][1];
};
const makeRandom = (seed: number) => () => {
  seed = (seed * 1664525 + 1013904223) % 4294967296;
  return seed / 4294967296;
};
const COLS = 1105;
const stepPath = (pts: Pt[], seed: number, amp: number) => {
  const rnd = makeRandom(seed);
  let d = "M0 51";
  let x = 0;
  while (x < COLS) {
    const base = lerp(pts, x / COLS);
    const n = rnd() + rnd() + rnd() - 1.5;
    const spike = rnd() < 0.06 ? 1.7 : 1;
    const y = base <= 0 ? 0 : Math.max(0, Math.round(base + n * spike * Math.min(amp, base)));
    x = Math.min(COLS, x + (rnd() < 0.45 ? 1 : 2));
    d += `V${y}H${x}`;
  }
  return d + "V51Z";
};
const Histogram = ({ red, green, seed }: { red: Pt[]; green: Pt[]; seed: number }) => (
  <svg width="100%" height="51" viewBox={`0 0 ${COLS} 51`} preserveAspectRatio="none" shapeRendering="crispEdges" aria-hidden="true">
    <rect width={COLS} height="51" fill="#c0c0c0" />
    <path d={stepPath(red, seed, 4)} fill="#cc0000" />
    <path d={stepPath(green, seed + 77, 5)} fill="#228b22" />
  </svg>
);
const red1: Pt[] = [[0, 10], [0.05, 9], [0.1, 7], [0.15, 4], [0.19, 1], [0.22, 0], [0.615, 0], [0.66, 2], [0.72, 5], [0.75, 7], [0.79, 12], [0.8, 51], [1, 51]];
const green1: Pt[] = [[0, 41], [0.04, 43], [0.12, 44], [0.2, 40], [0.3, 34], [0.4, 29], [0.5, 26], [0.6, 20], [0.66, 15], [0.7, 11], [0.74, 8], [0.8, 9], [0.85, 13], [0.9, 15], [0.95, 18], [1, 21]];
const red2: Pt[] = [[0, 51], [0.12, 51], [0.13, 4], [0.164, 2], [0.2, 0], [0.605, 0], [0.663, 2], [0.7, 4], [0.735, 6], [0.8, 8], [0.842, 13], [0.9, 15], [0.95, 17], [1, 18]];
const green2: Pt[] = [[0, 11], [0.04, 8], [0.09, 6], [0.12, 4], [0.15, 4], [0.19, 8], [0.217, 10], [0.29, 14], [0.343, 15], [0.397, 19], [0.484, 21], [0.555, 24], [0.591, 29], [0.663, 34], [0.735, 39], [0.79, 42], [0.842, 39], [0.913, 36], [0.985, 33], [1, 32]];

type BandRect = { from: number; to: number; top: string; bottom: string };
const Bands = ({ rects, gaps = [], glow }: { rects: BandRect[]; gaps?: Pt[]; glow?: Pt }) => (
  <svg width="100%" height="51" viewBox="0 0 1105 51" preserveAspectRatio="none" shapeRendering="crispEdges" aria-hidden="true">
    {rects.map((r) => (
      <g key={r.from}>
        <rect x={r.from} width={r.to - r.from} height="31" fill={r.top} />
        <rect x={r.from} width={r.to - r.from} y="31" height="20" fill={r.bottom} />
      </g>
    ))}
    {glow && (
      <>
        <defs>
          <linearGradient id="glow">
            <stop offset="0" stopColor="#fff" stopOpacity="0" />
            <stop offset=".5" stopColor="#fff" />
            <stop offset="1" stopColor="#fff" stopOpacity="0" />
          </linearGradient>
        </defs>
        <rect x={glow[0]} width={glow[1]} y="31" height="20" fill="url(#glow)" />
      </>
    )}
    {gaps.map(([x, w]) => <rect key={x} x={x} width={w} height="51" fill="#ececec" />)}
  </svg>
);

type Mark = { at: number; label: string; below?: boolean; noLine?: boolean };
type FieldDef = { label: string; value: string; on?: boolean; w: number };
type PlotDef = {
  name: string; lo: number; hi: number; ticks: string[]; marks: Mark[]; fields: FieldDef[]; output?: boolean; last?: boolean; art: React.ReactNode;
};
const pct = (v: number, p: PlotDef) => `${((v - p.lo) / (p.hi - p.lo)) * 100}%`;
const Tri = ({ up }: { up?: boolean }) => (
  <svg width="9" height="7" viewBox="0 0 9 7" aria-hidden="true"><path d={up ? "M0 7h9L4.500 0z" : "M0 0h9L4.500 7z"} /></svg>
);

const Plot = ({ p }: { p: PlotDef }) => (
  <PlotSection $output={p.output} $last={p.last}>
    <BarArea>
      {p.art}
      <AxisLayer>
        {p.ticks.map((t) => <Tick key={t} style={{ left: pct(Number(t), p) }}>{t}</Tick>)}
      </AxisLayer>
      {p.marks.map((m) => (
        <React.Fragment key={m.label}>
          {!m.noLine && <MarkerLine style={{ left: pct(m.at, p) }} />}
          <Marker $below={m.below} style={{ left: pct(m.at, p) }}>
            <span>{m.label}</span>
            <Tri up={m.below} />
          </Marker>
        </React.Fragment>
      ))}
    </BarArea>
    <FieldRow $output={p.output}>
      <VariableName>{p.name}</VariableName>
      {p.fields.map((f) => {
        const id = `${p.name}-${f.label}`;
        return (
          <Field key={f.label}>
            {p.output && <Check type="checkbox" id={`${id}-on`} defaultChecked={f.on} aria-label={f.label} />}
            <FieldLabel htmlFor={id} $w={f.w}>{f.label}</FieldLabel>
            <ValueInput id={id} defaultValue={f.value} disabled={p.output && !f.on} />
          </Field>
        );
      })}
    </FieldRow>
  </PlotSection>
);

const inFields = (a: string, b: string, c: string): FieldDef[] => [
  { label: "Low", value: a, w: 25 }, { label: "Nominal", value: b, w: 43 }, { label: "High", value: c, w: 27 },
];
const outFields = (a: string, b: string, c: string, on: number): FieldDef[] => [
  { label: "Low", value: a, w: 30, on: on === 0 }, { label: "Target", value: b, w: 42, on: on === 1 }, { label: "High", value: c, w: 32, on: on === 2 },
];
const YELLOW = "#ffd700";
const GREEN = "#228b22";
const inputs: PlotDef[] = [
  {
    name: "Section1", lo: 0.0015, hi: 0.00649, ticks: ["0.002", "0.003", "0.004", "0.005", "0.006"],
    marks: [{ at: 0.00522, label: "Nominal" }, { at: 0.0015, label: "Low", below: true, noLine: true }, { at: 0.00649, label: "High", below: true, noLine: true }],
    fields: inFields("0.0015", "0.00522", "0.00649"), art: <Histogram red={red1} green={green1} seed={12} />,
  },
  {
    name: "Section3", lo: 0.00152, hi: 0.00641, ticks: ["0.002", "0.003", "0.004", "0.005", "0.006"],
    marks: [{ at: 0.004, label: "Nominal" }, { at: 0.00152, label: "Low", below: true, noLine: true }, { at: 0.00641, label: "High", below: true, noLine: true }],
    fields: inFields("0.00152", "0.004", "0.00641"), last: true, art: <Histogram red={red2} green={green2} seed={91} />,
  },
];
const outputs: PlotDef[] = [
  {
    name: "First_Mode", lo: 11.05, hi: 21.05, output: true, ticks: ["12", "13", "14", "15", "16", "17", "18", "19", "20", "21"],
    marks: [{ at: 19.11563, label: "19.11563" }, { at: 18, label: "Low", below: true }],
    fields: outFields("18", "19.52339", "21.04678", 0),
    art: <Bands rects={[{ from: 0, to: 768, top: "#ffe34d", bottom: "#dc4b4b" }, { from: 768, to: 1105, top: YELLOW, bottom: GREEN }]} gaps={[[5, 1]]} />,
  },
  {
    name: "Mass", lo: 2155.65, hi: 6713.79, output: true, ticks: ["3000", "4000", "5000", "6000"],
    marks: [{ at: 4717.83403, label: "4717.83403" }, { at: 4869.80998, label: "Target" }],
    fields: outFields("2155.64852", "4869.80998", "6713.7868", 1),
    art: <Bands rects={[{ from: 0, to: 1105, top: YELLOW, bottom: GREEN }]} glow={[540, 236]} />,
  },
  {
    name: "Max_Displacement", lo: 0.01181, hi: 0.02742, output: true, last: true,
    ticks: Array.from({ length: 16 }, (_, i) => (0.012 + i * 0.001).toFixed(3)),
    marks: [{ at: 0.014, label: "0.014" }],
    fields: outFields("0.01181", "0.01962", "0.02742", -1),
    art: <Bands rects={[{ from: 0, to: 1105, top: YELLOW, bottom: GREEN }]} gaps={[[1010, 1], [1058, 1], [1074, 1], [1076, 1], [1081, 1], [1086, 1], [1088, 1], [1090, 4], [1097, 1], [1099, 1], [1103, 2]]} />,
  },
];

/* ---------- window ---------- */
const Caption = ({ title, inner }: { title: string; inner?: boolean }) => (
  <TitleBar $inner={inner}>
    <Logo bg />
    <TitleText as={inner ? "h2" : "h1"}>{title}</TitleText>
    <WinButtons>
      <WinButton aria-label="Minimize"><Svg s={15} v={15}><path d="M3 11.500h6" stroke="#fff" strokeWidth="3" /></Svg></WinButton>
      <WinButton aria-label="Maximize">
        <Svg s={15} v={15}>{inner ? <path d="M2.500 3.500h10v9h-10zM2 4h11" stroke="#fff" strokeWidth="1.700" /> : <path d="M2.500 6.500h7v6h-7zM5.500 5V2.500h7v7H11" stroke="#fff" strokeWidth="1.500" />}</Svg>
      </WinButton>
      <WinButton $close aria-label="Close"><Svg s={15} v={15}><path d="M2.500 2.500l10 10M12.500 2.500l-10 10" stroke="#fff" strokeWidth="2.200" /></Svg></WinButton>
    </WinButtons>
  </TitleBar>
);

const menus: [string, string, string, boolean?][] = [
  ["", "F", "ile"], ["", "E", "dit"], ["", "O", "rganize"], ["Wor", "k", "flow", true], ["I", "n", "terfaces", true],
  ["", "U", "CA", true], ["UC", "I", "", true], ["", "M", "ethod"], ["Mo", "d", "el"], ["", "P", "ostprocess"],
  ["", "T", "ools"], ["", "W", "indow"], ["", "H", "elp"],
];

const bottomA = [
  <Rainbow disk />, <Printer />, <Disk />,
  <Svg s={16} v={16}><path d="M1 1l14 14M14 1L2 15" stroke="#c80a0a" strokeWidth="2.600" /></Svg>,
  <Svg s={20} v={20}><path d="M1 7h8v5H1zM11 7h8v5h-8z" strokeWidth="1.500" /><path d="M5 9.500h10" strokeWidth="2" /></Svg>,
  <Svg s={18} v={18}><path d="M5 6c0-5 9-5 9 0 0 3-4 3-4 7M10 15v2" stroke="#fff" strokeWidth="3.500" /><path d="M5 6c0-5 8-5 8 0 0 3-4 3-4 6M9 14v2" strokeWidth="1.700" /></Svg>,
];
const bottomB = [
  <Arrow />,
  <Svg s={22} v={22}>{dots([[2, 2], [8, 2], [14, 2], [2, 8], [2, 14], [2, 20], [20, 2], [20, 8]], "#999", 1.400)}<path d="M8 5v12l3-3 3 6 3-1-3-6h5z" fill="#a9a9a9" stroke="#858585" /></Svg>,
  <Svg s={22} v={22}><path d="M1 1h14v14H1z" fill="#909090" stroke="#888" /><path d="M6 8h14v13H6z" fill="#a2a2a2" stroke="#808080" /></Svg>,
  <Svg s={22} v={22}><path d="M1 1h14v14H1z" fill="#a8a8a8" stroke="#888" /><path d="M7 8h14v13H7z" fill="#b4b4b4" stroke="#808080" /><path d="M9 10h6v6H9z" fill="#8a8a8a" stroke="none" /></Svg>,
  <Svg s={24}><g fill="#d2d0c4" stroke="#8f8f8f"><path d="M1 2l8 1v7H1z" /><path d="M1 2l6 10M9 3l13 9M1 10l6 13" /><path d="M7 12h15v11H7z" fill="#a2a2a2" /><path d="M14.500 14v7M11 17.500h7" strokeWidth="1.600" stroke="#777" /></g></Svg>,
  <Rainbow />,
];
const gridDots = [2, 7, 12, 17].flatMap((x) => [2, 7, 12, 17].map((y) => [x + 1, y + 1]));

const Line = () => <Svg s={24}><path d="M1 22L23 3" /></Svg>;

export default function App() {
  return (
    <Shell>
      <Global />
      <Caption title="Noesis Optimus Rev 9 SL1" />
      <MenuBar>
        {menus.map(([a, b, c, off], i) => (
          <MenuItem key={i} $active={i === 0} disabled={off}>{a}<u>{b}</u>{c}</MenuItem>
        ))}
      </MenuBar>
      <ToolBar>
        {topIcons.map((group, i) => (
          <React.Fragment key={i}>
            <Handle />
            {group.map((ic, j) => <ToolButton key={j}>{ic}</ToolButton>)}
          </React.Fragment>
        ))}
      </ToolBar>
      <Body>
        <LeftTools>
          <TopHandle />
          {leftA.map((ic, i) => <ToolButton key={i} $w={30}>{ic}</ToolButton>)}
          <Handle $down />
          {leftB.map((ic, i) => <ToolButton key={i} $w={30}>{ic}</ToolButton>)}
          <Rule />
          <ToolButton $w={30}>{history}</ToolButton>
        </LeftTools>
        <Side>
          <Tree />
          <PropertyPanel />
        </Side>
        <Splitter>
          <svg width="4" height="18" viewBox="0 0 4 18"><path d="M4 0v6L1 3zM0 12v6l3-3z" /></svg>
        </Splitter>
        <Mdi>
          <Child>
            <ChildTitle><Caption title="Trust Region_2" inner /></ChildTitle>
            <Sheet>
              <Path>D:\Program_Files\NOESIS\OPTIMUS\9\tutorial\tutorial_Stage_DOE_RSM_Opt_MOO.opt - Interpolating</Path>
              {inputs.map((p) => <Plot key={p.name} p={p} />)}
              <Band />
              {outputs.map((p) => <Plot key={p.name} p={p} />)}
            </Sheet>
          </Child>
        </Mdi>
        <RightTools>
          <RightColumn><TopHandle /><Items items={colA} /></RightColumn>
          <RightColumn><TopHandle /><Items items={colB} /></RightColumn>
          <RightColumn>
            <TopHandle />
            {shapes.map((s, i) => (
              <ShapeCell key={i}>
                <ToolButton $w={28} $on={i === 0}>
                  {i === 0 ? s : <Svg><g fill="#9a9a9a" stroke="#858585">{s}</g></Svg>}
                </ToolButton>
              </ShapeCell>
            ))}
            <Handle $down />
            <Items items={colC} />
          </RightColumn>
        </RightTools>
      </Body>
      <ToolBar $bottom>
        <Handle />
        {bottomA.map((ic, i) => <ToolButton key={i} $w={31}>{ic}</ToolButton>)}
        <Handle />
        {bottomB.map((ic, i) => <ToolButton key={i}>{ic}</ToolButton>)}
        <Handle />
        <ToolButton><Magnifier plus /></ToolButton>
        <ToolButton><Magnifier /></ToolButton>
        <Combo id="Zoom" value="100%" w={75} h={24} />
        <ToolButton $on><Svg s={22} v={22}>{dots(gridDots, "#000", 1)}</Svg></ToolButton>
        <ToolButton $on><Svg s={22} v={22}>{dots(gridDots, "#000", 1)}<circle cx="8" cy="16" r="3.500" fill="#bbb" /><path d="M10 12l5-7M11 5h4v4" stroke="#e11" strokeWidth="1.500" /></Svg></ToolButton>
        <ToolButton><Line /></ToolButton>
        <Drop aria-label="Line styles"><Caret /></Drop>
        <ToolButton $w={22}><Svg s={20} v={20}><path d="M1 12h18v8H1z" fill="#000" /><path d="M9 10l3-6 3-4 2 1-3 6-4 4z" fill="#2a55d0" /><path d="M15 0l2 1-1 3-3-1z" fill="#e8e8a0" stroke="none" /><path d="M3 10h7" stroke="#1d3fb0" strokeWidth="1.500" /></Svg></ToolButton>
        <Drop aria-label="Line colours"><Caret /></Drop>
        <ToolButton $w={28}><Svg s={24}><path d="M1 1h14v12H1z" stroke="#999" strokeDasharray="2 1" />{dots([[5, 4], [10, 6], [6, 10], [11, 11]], "#999", 1.900)}<path d="M17 5h3v5M18 9l2 3 2-3" stroke="#888" /><ellipse cx="15" cy="19" rx="7" ry="4" fill="#a4a4a4" stroke="#8a8a8a" /></Svg></ToolButton>
        <ToolButton><Svg s={24}><ellipse cx="9" cy="5" rx="7" ry="4" fill="#a4a4a4" stroke="#8a8a8a" /><path d="M5 11v6h4M8 15l3 2-3 2" stroke="#888" />{dots([[14, 14], [19, 17], [14, 20], [20, 21]], "#999", 2)}</Svg></ToolButton>
      </ToolBar>
    </Shell>
  );
}
